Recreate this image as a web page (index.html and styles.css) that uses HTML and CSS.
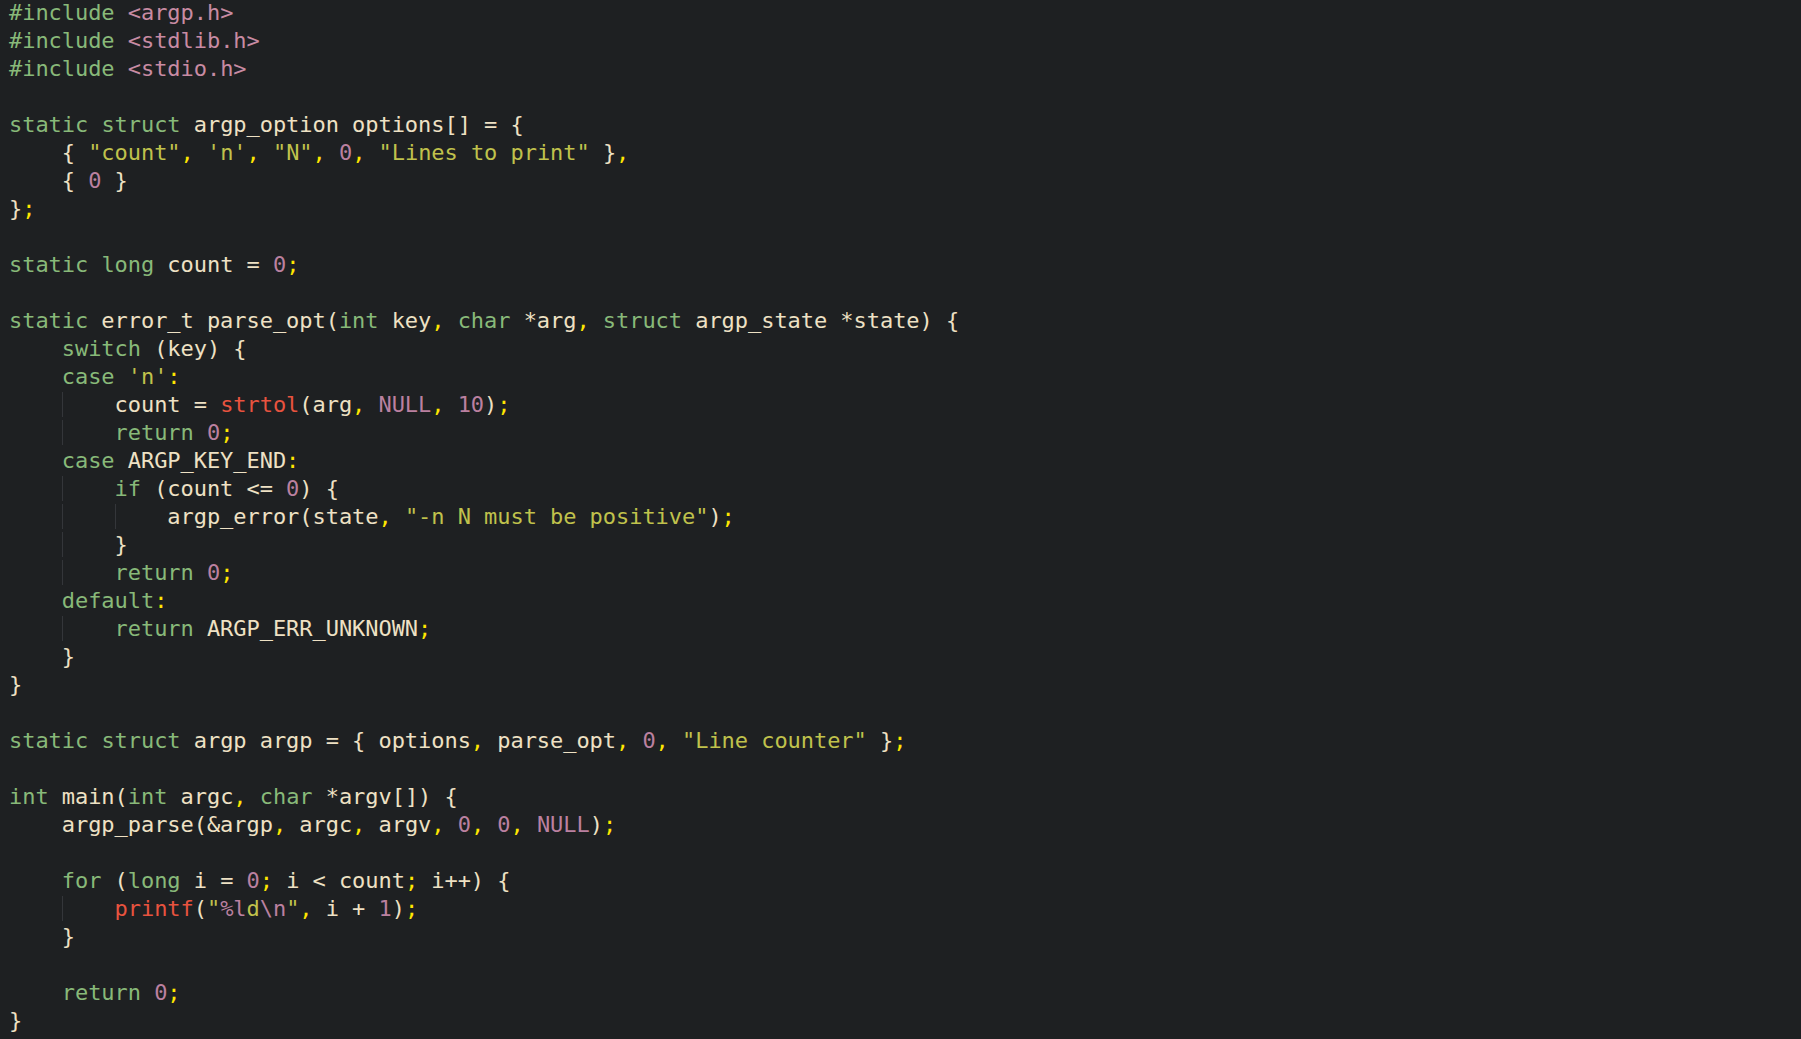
FILE: index.html
```html
<!DOCTYPE html>
<html lang="en">
<head>
<meta charset="utf-8">
<title>argp line counter</title>
<link rel="stylesheet" href="styles.css">
</head>
<body>
<pre class="code"><div class="ln"><span class="kw">#include</span> <span class="inc">&lt;argp.h&gt;</span></div><div class="ln"><span class="kw">#include</span> <span class="inc">&lt;stdlib.h&gt;</span></div><div class="ln"><span class="kw">#include</span> <span class="inc">&lt;stdio.h&gt;</span></div><div class="ln"> </div><div class="ln"><span class="kw">static</span> <span class="kw">struct</span> argp_option options[] = {</div><div class="ln">    { <span class="str">"count"</span><span class="p">,</span> <span class="str">'n'</span><span class="p">,</span> <span class="str">"N"</span><span class="p">,</span> <span class="num">0</span><span class="p">,</span> <span class="str">"Lines to print"</span> }<span class="p">,</span></div><div class="ln">    { <span class="num">0</span> }</div><div class="ln">}<span class="p">;</span></div><div class="ln"> </div><div class="ln"><span class="kw">static</span> <span class="kw">long</span> count = <span class="num">0</span><span class="p">;</span></div><div class="ln"> </div><div class="ln"><span class="kw">static</span> error_t parse_opt(<span class="kw">int</span> key<span class="p">,</span> <span class="kw">char</span> *arg<span class="p">,</span> <span class="kw">struct</span> argp_state *state) {</div><div class="ln">    <span class="kw">switch</span> (key) {</div><div class="ln">    <span class="kw">case</span> <span class="str">'n'</span><span class="p">:</span></div><div class="ln">    <span class="gd">    </span>count = <span class="fn">strtol</span>(arg<span class="p">,</span> <span class="num">NULL</span><span class="p">,</span> <span class="num">10</span>)<span class="p">;</span></div><div class="ln">    <span class="gd">    </span><span class="kw">return</span> <span class="num">0</span><span class="p">;</span></div><div class="ln">    <span class="kw">case</span> ARGP_KEY_END<span class="p">:</span></div><div class="ln">    <span class="gd">    </span><span class="kw">if</span> (count &lt;= <span class="num">0</span>) {</div><div class="ln">    <span class="gd">    </span><span class="gd">    </span>argp_error(state<span class="p">,</span> <span class="str">"-n N must be positive"</span>)<span class="p">;</span></div><div class="ln">    <span class="gd">    </span>}</div><div class="ln">    <span class="gd">    </span><span class="kw">return</span> <span class="num">0</span><span class="p">;</span></div><div class="ln">    <span class="kw">default</span><span class="p">:</span></div><div class="ln">    <span class="gd">    </span><span class="kw">return</span> ARGP_ERR_UNKNOWN<span class="p">;</span></div><div class="ln">    }</div><div class="ln">}</div><div class="ln"> </div><div class="ln"><span class="kw">static</span> <span class="kw">struct</span> argp argp = { options<span class="p">,</span> parse_opt<span class="p">,</span> <span class="num">0</span><span class="p">,</span> <span class="str">"Line counter"</span> }<span class="p">;</span></div><div class="ln"> </div><div class="ln"><span class="kw">int</span> main(<span class="kw">int</span> argc<span class="p">,</span> <span class="kw">char</span> *argv[]) {</div><div class="ln">    argp_parse(&amp;argp<span class="p">,</span> argc<span class="p">,</span> argv<span class="p">,</span> <span class="num">0</span><span class="p">,</span> <span class="num">0</span><span class="p">,</span> <span class="num">NULL</span>)<span class="p">;</span></div><div class="ln"> </div><div class="ln">    <span class="kw">for</span> (<span class="kw">long</span> i = <span class="num">0</span><span class="p">;</span> i &lt; count<span class="p">;</span> i++) {</div><div class="ln">    <span class="gd">    </span><span class="fn">printf</span>(<span class="str">"</span><span class="num">%l</span><span class="str">d</span><span class="num">\n</span><span class="str">"</span><span class="p">,</span> i + <span class="num">1</span>)<span class="p">;</span></div><div class="ln">    }</div><div class="ln"> </div><div class="ln">    <span class="kw">return</span> <span class="num">0</span><span class="p">;</span></div><div class="ln">}</div></pre>
</body>
</html>
```

FILE: styles.css
```css
html, body {
  margin: 0;
  padding: 0;
  background: #1e2022;
  height: 100%;
  overflow: hidden;
}

.code {
  margin: -1px 0 0 0;
  padding: 0 0 0 9px;
  font-family: "DejaVu Sans Mono", "Liberation Mono", monospace;
  font-size: 22px;
  letter-spacing: -0.05px;
  line-height: 28px;
  color: #eee1c4;
  white-space: pre;
}

.ln {
  height: 28px;
}

.kw { color: #88b979; }
.inc { color: #c88ba3; }
.str { color: #c0c24c; }
.num { color: #bb80a0; }
.p { color: #ffe600; }
.fn { color: #e8533f; }

.gd {
  box-shadow: inset 1px 0 0 #34363a;
}
```
